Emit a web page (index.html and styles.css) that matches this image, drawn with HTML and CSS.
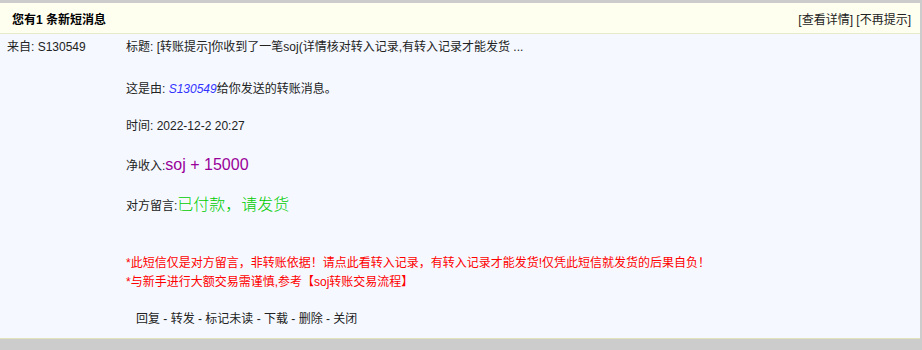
FILE: index.html
```html
<!DOCTYPE html>
<html lang="zh">
<head>
<meta charset="utf-8">
<link rel="stylesheet" href="styles.css">
</head>
<body>
<div class="box">
  <div class="head">
    <span class="head-title">您有1 条新短消息</span>
    <span class="head-links"><a href="#">[查看详情]</a> <a href="#">[不再提示]</a></span>
  </div>
  <div class="main">
    <div class="from">来自: S130549</div>
    <div class="content">
      <div class="line title">标题: [转账提示]你收到了一笔soj(详情核对转入记录,有转入记录才能发货 ...</div>
      <div class="line sender">这是由: <a class="user" href="#">S130549</a>给你发送的转账消息。</div>
      <div class="line time">时间: 2022-12-2 20:27</div>
      <div class="line income">净收入:<span class="amount">soj + 15000</span></div>
      <div class="line note">对方留言:<span class="msg">已付款，请发货</span></div>
      <div class="warn">
        <div>*此短信仅是对方留言，非转账依据！请点此看转入记录，有转入记录才能发货!仅凭此短信就发货的后果自负！</div>
        <div>*与新手进行大额交易需谨慎,参考【soj转账交易流程】</div>
      </div>
      <div class="actions">回复 - 转发 - 标记未读 - 下载 - 删除 - 关闭</div>
    </div>
  </div>
</div>
</body>
</html>
```
FILE: styles.css
```css
html, body {
  margin: 0;
  padding: 0;
  background: #cccccc;
  font-family: "Liberation Sans", Arial, "Noto Sans CJK SC", sans-serif;
  font-size: 12px;
  color: #222;
}
a { color: inherit; text-decoration: none; }
.box {
  margin-top: 3px;
  width: 920px;
}
.head {
  height: 31px;
  background: #fffff0;
  border-bottom: 1px solid #e8e8cc;
  display: flex;
  align-items: center;
  justify-content: space-between;
  padding: 0 9px 0 12px;
  box-sizing: border-box;
}
.head-title { font-weight: bold; color: #000; }
.head-links { color: #222; }
.main {
  background: #f5f9ff;
  height: 305px;
  border-bottom: 1px solid #e2e2bc;
  display: flex;
  padding: 5px 0 0 7px;
  box-sizing: border-box;
}
.from {
  width: 119px;
  line-height: 16px;
}
.content { flex: 1; }
.line { line-height: 16px; }
.sender { margin-top: 26px; }
.user { color: #3333ff; font-style: italic; }
.time { margin-top: 21px; }
.income { margin-top: 21px; line-height: 20px; }
.amount { color: #990099; font-size: 16px; }
.note { margin-top: 18px; line-height: 22px; }
.msg { color: #00cc00; font-size: 16px; font-weight: 300; }
.warn {
  margin-top: 37px;
  color: #ff0000;
  line-height: 19px;
}
.actions {
  margin-top: 19px;
  padding-left: 10px;
  line-height: 16px;
}
```
